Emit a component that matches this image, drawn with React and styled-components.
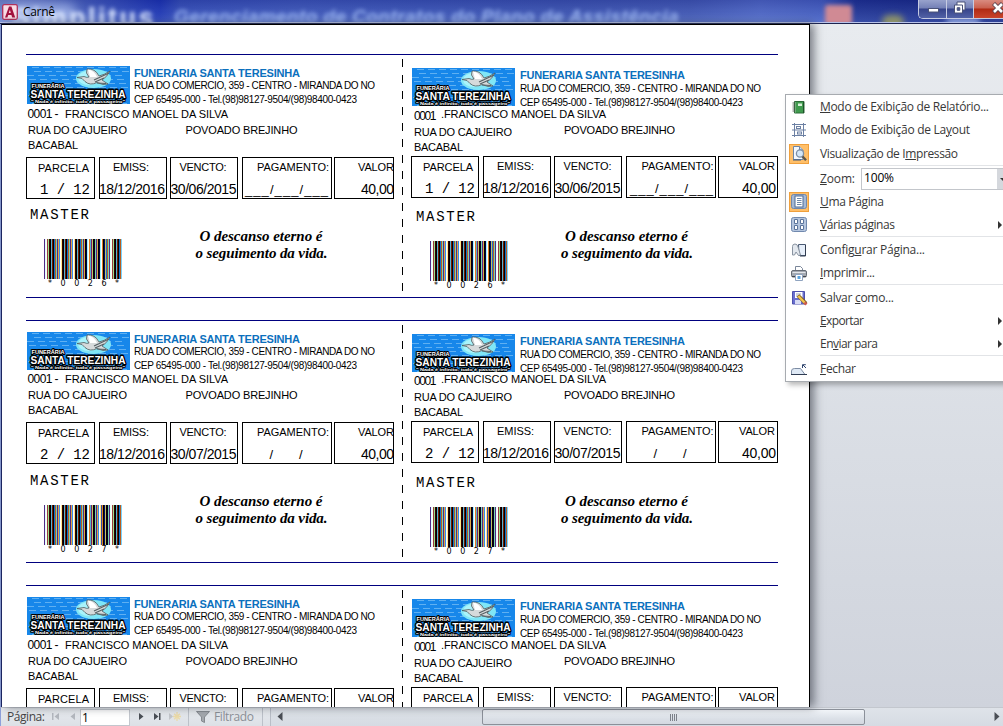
import React, { useLayoutEffect, useRef } from "react";
import styled, { createGlobalStyle, css } from "styled-components";

const Global = createGlobalStyle`
  body { margin: 0; overflow: hidden; background: #d3d7df; }
  * { box-sizing: border-box; }
`;

const SANS = '"Liberation Sans", Arial, sans-serif';
const MONO = '"Liberation Mono", "Courier New", monospace';
const SERIF = '"Liberation Serif", "Times New Roman", serif';
const UI = '"Open Sans", "Noto Sans", sans-serif';

/* ---------- text that is tracked to fill a given width ---------- */

const Run = styled.span`
  display: inline-block;
  flex: none;
  white-space: pre;
  font-family: ${(p) => p.$font || SANS};
  font-size: ${(p) => p.$size || 12}px;
  font-weight: ${(p) => (p.$bold ? 700 : 400)};
  font-style: ${(p) => (p.$italic ? "italic" : "normal")};
  color: ${(p) => p.$color || "#000"};
  line-height: ${(p) => p.$line || 12}px;
  margin-left: ${(p) => p.$x || 0}px;
  margin-top: ${(p) => p.$y || 0}px;
`;

function Fit({ w, children, ...rest }) {
  const ref = useRef(null);
  useLayoutEffect(() => {
    const el = ref.current;
    el.style.width = "auto";
    el.style.letterSpacing = "0px";
    const natural = el.getBoundingClientRect().width;
    const n = el.textContent.length;
    el.style.letterSpacing = (w - natural) / Math.max(1, n - 1) + "px";
    el.style.width = w + "px";
  }, [w, children]);
  return (
    <Run ref={ref} {...rest}>
      {children}
    </Run>
  );
}

/* ---------- window frame ---------- */

const Window = styled.div`
  position: relative;
  display: flex;
  flex-direction: column;
  width: 1003px;
  height: 726px;
  overflow: hidden;
  background: #d3d7df;
`;

const TitleBar = styled.header`
  position: relative;
  display: flex;
  flex: none;
  height: 24px;
  overflow: hidden;
  border-bottom: 1px solid #1c2350;
  background: linear-gradient(90deg, #8b9fdc 0, #5f79ca 60px, #1f39bc 160px, #3c57c0 180px, #4661c2 300px, #435ebe 420px, #445db8 560px, #4a62bb 690px, #5a74d0 760px, #4f6acb 822px, #223694 856px, #182980 1003px);
`;

const GlassShade = styled.div`
  position: absolute;
  inset: 0 0 1px 0;
  background: linear-gradient(180deg, rgba(8, 16, 110, 0.3), rgba(110, 135, 215, 0.28));
`;

const GlassEdge = styled.div`
  position: absolute;
  inset: auto 0 0 0;
  height: 1px;
  background: #b9c3ea;
`;

const Behind = styled.span`
  position: absolute;
  left: ${(p) => p.$left}px;
  top: ${(p) => p.$top}px;
  font: ${(p) => p.$font};
  letter-spacing: ${(p) => p.$track || 0}px;
  color: ${(p) => p.$color};
  filter: blur(${(p) => p.$blur}px);
  white-space: pre;
`;

const Glow = styled.span`
  position: absolute;
  left: ${(p) => p.$left}px;
  top: ${(p) => p.$top}px;
  width: ${(p) => p.$w}px;
  height: ${(p) => p.$h}px;
  border-radius: ${(p) => p.$r || 3}px;
  background: ${(p) => p.$fill};
  filter: blur(${(p) => p.$blur || 2}px);
`;

const Caption = styled.div`
  position: relative;
  display: flex;
  padding-left: 2px;
  svg { margin-top: 4px; }
`;

const Buttons = styled.div`
  position: relative;
  display: flex;
  margin-left: auto;
  width: 85px;
  height: 19px;
  border: solid #c6cbe2;
  border-width: 0 0 1px 1px;
  border-radius: 0 0 0 5px;
  overflow: hidden;
`;

const WinButton = styled.div`
  display: flex;
  align-items: flex-start;
  flex: none;
  width: ${(p) => p.$w}px;
  height: 18px;
  padding: ${(p) => p.$pad};
  border-right: 1px solid #c6cbe2;
  background: ${(p) =>
    p.$close
      ? "linear-gradient(180deg,#d98b80 0,#c9604f 8px,#b02a14 9px,#c8442c 18px)"
      : "linear-gradient(180deg,#98a2cc 0,#7480b6 8px,#36438a 9px,#5262a6 18px)"};
`;

const Body = styled.main`
  position: relative;
  flex: none;
  display: flex;
  height: 683px;
  border-left: 1px solid #8ea0da;
  background: linear-gradient(180deg, #e8ebef 0, #dde1e7 330px, #cfd3dc 683px);
`;

const Sheet = styled.section`
  flex: none;
  width: 809px;
  height: 683px;
  overflow: hidden;
  padding: 29px 0 0 24px;
  background: #fff;
  border: solid #000;
  border-width: 1px 1px 0 1px;
  border-left-color: #1b2560;
  box-shadow: 4px 0 9px rgba(60, 65, 75, 0.65);
`;

/* ---------- receipts ---------- */

const Receipt = styled.article`
  display: flex;
  width: 752px;
  height: ${(p) => p.$h}px;
  margin-bottom: 22px;
  border: solid #00007f;
  border-width: 1px 0;
`;

const Tear = styled.div`
  flex: none;
  width: 1px;
  height: 232px;
  margin-top: 4px;
  background: repeating-linear-gradient(180deg, #000 0 8px, transparent 8px 16px);
`;

const Slip = styled.div`
  flex: none;
  width: ${(p) => p.$w}px;
  height: 241px;
`;

const Head = styled.div`
  display: flex;
  height: 50px;
  padding-left: ${(p) => p.$pad}px;
  svg { flex: none; margin-top: ${(p) => p.$logo}px; }
`;

const HeadText = styled.div`
  display: flex;
  flex-direction: column;
  align-items: flex-start;
`;

const Line = styled.div`
  display: flex;
  align-items: flex-start;
  height: 12px;
  margin-top: ${(p) => p.$mt || 0}px;
`;

const Fields = styled.div`
  display: flex;
  margin-top: ${(p) => p.$mt}px;
  padding-left: ${(p) => p.$pad}px;
`;

const Box = styled.div`
  flex: none;
  display: flex;
  flex-direction: column;
  align-items: flex-start;
  width: ${(p) => p.$w}px;
  height: 42px;
  margin-left: ${(p) => p.$ml || 0}px;
  border: 1px solid #000;
`;

const Foot = styled.div`
  display: flex;
`;

const FootLeft = styled.div`
  flex: none;
  display: flex;
  flex-direction: column;
  align-items: flex-start;
  width: 150px;
  svg { display: block; margin-left: ${(p) => p.$bar}px; margin-top: ${(p) => p.$gap}px; }
`;

const Motto = styled.div`
  display: flex;
  flex-direction: column;
  align-items: flex-start;
`;

function Logo() {
  const dashes = [];
  for (let y = 1; y < 38; y += 4) {
    for (let x = (y * 5) % 9; x < 96; x += 11) {
      dashes.push(<rect key={x + "-" + y} x={x} y={y} width="7" height="1" fill="#5fb0f2" />);
    }
  }
  const word = { fontFamily: SANS, fontWeight: 700, paintOrder: "stroke", stroke: "#000", strokeLinejoin: "round", fill: "#fff" };
  return (
    <svg width="103" height="38" viewBox="0 0 103 38">
      <rect width="103" height="38" fill="#1787ea" />
      {dashes}
      <ellipse cx="66.500" cy="12.500" rx="17.500" ry="9.500" fill="#7fe6f7" />
      <ellipse cx="62" cy="12" rx="11" ry="7" fill="#a9f3fb" />
      <path d="M50 11.500 L57 10.500 Q60 12 62 11 Q58 7 60 3 Q68 2 72 10 Q77 9 83 5 Q80 11 75 14 L81 18 L76 18.500 L70 16.500 Q63 20 58 15.500 L55 12.500Z" fill="#d6dadb" stroke="#4c5c60" strokeWidth=".8" />
      <path d="M61 3.500 Q67 4 70 11 L63 11Z" fill="#fff" />
      <path d="M67 14 L82 7 M68 16 L77 12 M70 17 L79 17.500" stroke="#566165" strokeWidth="1.200" fill="none" />
      <text {...word} x="4.500" y="22" fontSize="5.500" strokeWidth="2" textLength="33" lengthAdjust="spacingAndGlyphs">FUNERÁRIA</text>
      <text {...word} x="3.500" y="32" fontSize="10.800" strokeWidth="2.800" textLength="95" lengthAdjust="spacingAndGlyphs">SANTA TEREZINHA</text>
      <text {...word} x="4" y="36.600" fontSize="4.400" strokeWidth="1.800" textLength="94" lengthAdjust="spacingAndGlyphs">" Nada é infinito, tudo é passageiro"</text>
    </svg>
  );
}

/* Code 39 element widths, bar and space alternating */
const CODE39 = {
  "*": "nwnnwnwnn",
  0: "nnnwwnwnn",
  2: "nnwwnnnnw",
  6: "nnwwwnnnn",
  7: "nnnwnnwnw",
  8: "wnnwnnwnn",
};

function Barcode({ code }) {
  const unit = 0.8125;
  const bars = [];
  let x = 0;
  for (const ch of code) {
    [...CODE39[ch]].forEach((e, i) => {
      const w = (e === "w" ? 3 : 1) * unit;
      if (i % 2 === 0) bars.push([x, x + w]);
      x += w;
    });
    x += unit;
  }
  const ink = (a, b) =>
    bars.reduce((s, [p, q]) => s + Math.max(0, Math.min(b, q) - Math.max(a, p)), 0) / (b - a);
  const level = (a) => Math.round(255 * (1 - Math.min(1, ink(a - 0.3, a + 0.63))));
  const cols = [];
  for (let i = 0; i < 78; i++) {
    cols.push(
      <rect key={i} x={i} width="1" height="40" fill={`rgb(${level(i)},${level(i + 0.333)},${level(i + 0.667)})`} />
    );
  }
  return (
    <svg width="78" height="40" shapeRendering="crispEdges">
      {cols}
    </svg>
  );
}

const LEFT = {
  width: 376, pad: 1, logo: 11, textX: 4, title: 12, line1: 1, line2: 2, titleW: 166, line1W: 241, line2W: 223,
  codeX: 1.5, codeW: 31, code: "0001 -", codeY: 0, nameX: 6.5, name: "FRANCISCO MANOEL DA SILVA", nameW: 163, nameMt: 3,
  streetX: 2, streetW: 99, streetY: 0, areaX: 58.5, areaW: 112, streetMt: 4, cityMt: 3, cityW: 50,
  boxPad: 0, boxMt: 6,
  boxes: [
    { w: 69, ml: 0, lx: 11, lw: 51, ly: 4, vx: 13, vw: 50 },
    { w: 68, ml: 4, lx: 13, lw: 36, ly: 3, vx: -1, vw: 66 },
    { w: 68, ml: 3, lx: 8.5, lw: 47, ly: 3, vx: -0.5, vw: 66 },
    { w: 90, ml: 4, lx: 14, lw: 72, ly: 3, vx: 2, vw: 83, sx: 26.5 },
    { w: 60, ml: 2, lx: 23, lw: 36, ly: 3, vx: 26, vw: 33 },
  ],
  planX: 4, planW: 59, planMt: 10, bar: 18, barGap: 18, digitX: 22, mottoX: 23.5, mottoMt: 31,
};

const RIGHT = {
  width: 375, pad: 9, logo: 13, textX: 5, title: 14, line1: 2, line2: 2, titleW: 165, line1W: 241, line2W: 223,
  codeX: 11, codeW: 22.5, code: "0001", codeY: 2, nameX: 4.5, name: ".FRANCISCO MANOEL DA SILVA", nameW: 165, nameMt: 3,
  streetX: 11, streetW: 98, streetY: 2, areaX: 52, areaW: 111, streetMt: 4, cityMt: 5, cityW: 49,
  boxPad: 8, boxMt: 3,
  boxes: [
    { w: 68, ml: 0, lx: 11, lw: 50, ly: 4, vx: 13, vw: 50 },
    { w: 68, ml: 4, lx: 13, lw: 37, ly: 3, vx: -1, vw: 66 },
    { w: 68, ml: 3, lx: 8.5, lw: 48, ly: 3, vx: -0.5, vw: 66 },
    { w: 90, ml: 4, lx: 14.5, lw: 72, ly: 3, vx: 3, vw: 83, sx: 26.5 },
    { w: 60, ml: 2, lx: 20, lw: 36, ly: 3, vx: 23, vw: 34 },
  ],
  planX: 13, planW: 59, planMt: 13, bar: 27, barGap: 18, digitX: 31, mottoX: 12, mottoMt: 32,
};

function SlipView({ side, data }) {
  const s = side;
  const labels = ["PARCELA", "EMISS:", "VENCTO:", "PAGAMENTO:", "VALOR"];
  const values = [data.part, "18/12/2016", data.due, null, "40,00"];
  return (
    <Slip $w={s.width}>
      <Head $pad={s.pad} $logo={s.logo}>
        <Logo />
        <HeadText>
          <Fit w={s.titleW} $size={11} $bold $color="#0b70bd" $x={s.textX} $y={s.title}>FUNERARIA SANTA TERESINHA</Fit>
          <Fit w={s.line1W} $size={10} $x={s.textX} $y={s.line1}>RUA DO COMERCIO, 359 - CENTRO - MIRANDA DO NO</Fit>
          <Fit w={s.line2W} $size={10} $x={s.textX} $y={s.line2}>CEP 65495-000 - Tel.(98)98127-9504/(98)98400-0423</Fit>
        </HeadText>
      </Head>
      <Line $mt={s.nameMt + data.up}>
        <Fit w={s.codeW} $size={12} $x={s.codeX} $y={s.codeY}>{s.code}</Fit>
        <Fit w={s.nameW} $size={11} $x={s.nameX}>{s.name}</Fit>
      </Line>
      <Line $mt={s.streetMt}>
        <Fit w={s.streetW} $size={11} $x={s.streetX} $y={s.streetY}>RUA DO CAJUEIRO</Fit>
        <Fit w={s.areaW} $size={11} $x={s.areaX}>POVOADO BREJINHO</Fit>
      </Line>
      <Line $mt={s.cityMt}>
        <Fit w={s.cityW} $size={11} $x={s.streetX}>BACABAL</Fit>
      </Line>
      <Fields $mt={s.boxMt} $pad={s.boxPad}>
        {s.boxes.map((b, i) => (
          <Box key={i} $w={b.w} $ml={b.ml}>
            <Fit w={b.lw} $size={11} $x={b.lx} $y={b.ly}>{labels[i]}</Fit>
            {i === 3 ? (
              data.blank ? (
                <Fit w={b.vw} $size={13} $x={b.vx} $y={11}>___/___/___</Fit>
              ) : (
                <Fit w={33} $size={13} $x={b.sx} $y={11}>{"/      /"}</Fit>
              )
            ) : (
              <Fit w={b.vw} $font={i === 0 ? MONO : SANS} $size={14} $x={b.vx} $y={i === 0 ? 10 : 10}>{values[i]}</Fit>
            )}
          </Box>
        ))}
      </Fields>
      <Foot>
        <FootLeft $bar={s.bar} $gap={s.barGap}>
          <Fit w={s.planW} $font={MONO} $size={14} $x={s.planX} $y={s.planMt - data.up}>MASTER</Fit>
          <Barcode code={data.code} />
          <Fit w={71} $font={'"DejaVu Sans", sans-serif'} $size={8} $x={s.digitX} $y={-1}>{data.code}</Fit>
        </FootLeft>
        <Motto>
          <Fit w={123} $font={SERIF} $size={15} $bold $italic $x={s.mottoX} $y={s.mottoMt}>O descanso eterno é</Fit>
          <Fit w={132} $font={SERIF} $size={15} $bold $italic $x={s.mottoX - 4} $y={5}>o seguimento da vida.</Fit>
        </Motto>
      </Foot>
    </Slip>
  );
}

const RECEIPTS = [
  { h: 244, part: "1 / 12", due: "30/06/2015", code: "*0026*", blank: true, up: 0 },
  { h: 243, part: "2 / 12", due: "30/07/2015", code: "*0027*", up: -1 },
  { h: 244, part: "3 / 12", due: "30/08/2015", code: "*0028*", up: 0 },
];

/* ---------- context menu ---------- */

const Menu = styled.nav`
  position: absolute;
  left: 785px;
  top: 94px;
  width: 230px;
  height: 288px;
  border: 1px solid #a7abb0;
  background: #fff;
  box-shadow: 3px 3px 5px rgba(0, 0, 0, 0.28);
`;

const Item = styled.div`
  display: flex;
  align-items: flex-start;
  height: 23px;
  margin-top: ${(p) => p.$mt || 0}px;
`;

const IconCell = styled.span`
  flex: none;
  display: flex;
  align-items: center;
  justify-content: center;
  width: 20px;
  height: 20px;
  margin: 2px 11px 0 3px;
  ${(p) =>
    p.$on &&
    css`
      background: #ffbf69;
      border: 1px solid #f0a03c;
    `}
`;

const Rule = styled.div`
  height: 1px;
  margin: 0 0 1px 34px;
  background: #e2e4e7;
`;

const Submenu = styled.span`
  margin-left: auto;
  margin-right: 12px;
  margin-top: 8px;
  border: 4px solid transparent;
  border-left: 4px solid #333;
  border-right: 0;
`;

const ZoomBox = styled.span`
  flex: none;
  display: flex;
  width: 160px;
  height: 22px;
  margin: 1px 0 0 6px;
  border: 1px solid #c3c6cb;
`;

const ZoomArrow = styled.span`
  margin-left: auto;
  width: 23px;
  background: #d5d8dd;
  &::after {
    content: "";
    display: block;
    margin: 9px 0 0 3px;
    width: 0;
    border: 3px solid transparent;
    border-top-color: #333;
  }
`;

const IcReport = () => (
  <svg width="16" height="16" viewBox="0 0 16 16">
    <path d="M3.500 2.500h9.500v11.500h-9.500z" fill="#3f9b4e" stroke="#2c6a38" />
    <path d="M12.500 3v11" stroke="#1e5229" />
    <path d="M4.500 3v10.500" stroke="#7cc486" />
    <rect x="7" y="4.500" width="4" height="2.500" fill="#d8f0d8" />
    <path d="M1.500 4h3M1.500 6h3M1.500 8h3M1.500 10h3M1.500 12h3" stroke="#505a52" strokeWidth=".9" />
  </svg>
);
const IcLayout = () => (
  <svg width="16" height="16" viewBox="0 0 16 16" fill="none" stroke="#6c80a3">
    <path d="M3.500 1v14M12.500 1v14M1 2.500h14M1 8h14M1 13.500h14" />
    <rect x="5.500" y="4.500" width="4" height="2" fill="#fff" />
    <rect x="6.500" y="10" width="4" height="2" fill="#fff" />
  </svg>
);
const IcPreview = () => (
  <svg width="18" height="18" viewBox="0 0 18 18">
    <path d="M3.500 1.500h6l3.500 3.500v9.500h-9.500z" fill="#f4f8fd" stroke="#6e86a6" />
    <path d="M9.500 1.500v3.500h3.500" fill="#cfdcec" stroke="#6e86a6" />
    <circle cx="10" cy="8.500" r="3.600" fill="#d5e7f7" stroke="#7d8fa6" strokeWidth="1.300" />
    <path d="M12.500 11.500l3.500 3.800" stroke="#5d564a" strokeWidth="2.400" />
    <path d="M3 15h8" stroke="#3f5878" />
  </svg>
);
const IcOne = () => (
  <svg width="18" height="18" viewBox="0 0 18 18">
    <rect x="1.500" y="1.500" width="15" height="14" rx="2" fill="#a5b8d4" stroke="#6f87ad" />
    <rect x="5" y="3" width="8" height="11" fill="#fff" stroke="#4f6a94" />
    <path d="M7 5.500h4.500M7 7.500h4.500M7 9.500h4.500M7 11.500h4.500" stroke="#7088aa" />
  </svg>
);
const IcMany = () => (
  <svg width="18" height="18" viewBox="0 0 18 18">
    <rect x="1.500" y="1.500" width="15" height="14" rx="2" fill="#b4c5de" stroke="#7189ae" />
    <path d="M4.500 3.500h3v4h-3zM10.500 3.500h3v4h-3zM4.500 9.500h3v4h-3zM10.500 9.500h3v4h-3z" fill="#fff" stroke="#5a749c" />
  </svg>
);
const IcSetup = () => (
  <svg width="16" height="16" viewBox="0 0 16 16">
    <path d="M7.500 2.500h7v11H8z" fill="#e7effa" stroke="#4a5a74" />
    <path d="M14.500 3v11H9" fill="none" stroke="#313c50" />
    <path d="M1.500 13V4.500Q1.500 2 4 2q2.500 0 3 3L9.500 13l-2 .5L5 10l-1.500 3z" fill="#e3e8ee" stroke="#8a94a1" />
  </svg>
);
const IcPrint = () => (
  <svg width="18" height="18" viewBox="0 0 18 18">
    <path d="M5.500 7V2.500h5l2 2V7" fill="#fff" stroke="#7a8699" />
    <rect x="1.500" y="6.500" width="15" height="6.500" rx="1.500" fill="#a4a9b1" stroke="#666c76" />
    <path d="M2.500 8.500h13" stroke="#e2e5ea" />
    <path d="M2 12.500h14" stroke="#44484f" />
    <path d="M5.500 10.500h7v6h-7z" fill="#fff" stroke="#8fa3bf" />
    <rect x="7.500" y="12" width="3" height="3" fill="#5aa2dd" />
  </svg>
);
const IcSave = () => (
  <svg width="18" height="18" viewBox="0 0 18 18">
    <path d="M2.500 2.500h12v12.500h-12z" fill="#6a6fd0" stroke="#4d51ac" />
    <rect x="5" y="3" width="7.500" height="6" fill="#fff" />
    <path d="M6 5h5M6 7h4" stroke="#9aa0c0" />
    <rect x="5" y="11" width="6" height="4" fill="#d8dcf4" />
    <path d="M8 6.500l8 8" stroke="#7a5a1c" strokeWidth="3.800" />
    <path d="M8.300 7l6.700 7" stroke="#f3c44e" strokeWidth="2.400" />
    <path d="M14.500 13.500l2 2" stroke="#d05a50" strokeWidth="2.600" />
  </svg>
);
const IcClose = () => (
  <svg width="18" height="18" viewBox="0 0 18 18">
    <path d="M1.500 14.500V11q0-2.500 3-2.500h6l4.500 6z" fill="#dfe9f5" stroke="#7d8ca3" />
    <path d="M1 14.500h16" stroke="#2f3b52" />
    <path d="M16 8l-3-3M12.500 8V4.700h3.300" stroke="#2f456e" fill="none" />
  </svg>
);

function MenuItem({ icon, on, w, mt, more, children }) {
  return (
    <Item $mt={mt}>
      <IconCell $on={on}>{icon}</IconCell>
      <Fit w={w} $font={UI} $line={23} $color="#383838">{children}</Fit>
      {more && <Submenu />}
    </Item>
  );
}

/* ---------- status bar ---------- */

const Status = styled.footer`
  flex: none;
  display: flex;
  align-items: stretch;
  height: 19px;
  border-top: 1px solid #c3c7ce;
  border-left: 1px solid #8ea0da;
  background: linear-gradient(180deg, #dfe3e9, #d6dbe3);
`;

const Nav = styled.div`
  flex: none;
  display: flex;
  width: 270px;
  padding-left: 6px;
  background: linear-gradient(180deg, #e9ecf0, #dce0e6);
  border-right: 1px solid #b9bec7;
`;

const PageInput = styled.div`
  flex: none;
  display: flex;
  align-items: flex-start;
  width: 50px;
  height: 17px;
  margin: 1px 0 0 4px;
  border: 1px solid #c3c7ce;
  background: #fff;
`;

const Split = styled.span`
  flex: none;
  width: 1px;
  margin-left: ${(p) => p.$ml}px;
  background: #bcc1c9;
`;

const NavIcon = styled.svg`
  flex: none;
  margin-left: ${(p) => p.$ml}px;
`;

const Scroll = styled.div`
  flex: 1;
  display: flex;
  height: 18px;
  padding: 1px 0 0 6px;
`;

const Thumb = styled.div`
  flex: none;
  display: flex;
  justify-content: center;
  gap: 1px;
  width: 383px;
  height: 16px;
  margin-left: 199px;
  padding-top: 4px;
  border: 1px solid #8b9099;
  border-radius: 2px;
  background: linear-gradient(180deg, #f1f4f8, #dce1e8 60%, #d3d8e0);
  i { width: 1px; height: 7px; background: #7d828b; }
`;

export default function App() {
  return (
    <Window>
      <Global />
      <TitleBar>
        <GlassShade />
        <Glow $left={10} $top={4} $w={66} $h={20} $fill="rgba(200,216,255,.6)" $r={8} $blur={6} />
        <Behind $left={12} $top={2} $font={`700 27px/32px ${SANS}`} $track={2.5} $color="#dde8ff" $blur={2}>Simplitus</Behind>
        <Behind $left={174} $top={5} $font={`italic 700 19px/24px ${SANS}`} $track={0.42} $color="rgba(170,196,252,.85)" $blur={2}>Gerenciamento de Contratos do Plano de Assistência</Behind>
        <Glow $left={825} $top={5} $w={27} $h={20} $fill="#d08a94" />
        <Glow $left={882} $top={15} $w={22} $h={14} $fill="#8d9268" $r={10} $blur={3} />
        <Glow $left={946} $top={18} $w={34} $h={8} $fill="#8fa5df" $r={4} $blur={3} />
        <GlassEdge />
        <Caption>
          <svg width="16" height="16" viewBox="0 0 16 16">
            <rect x=".7" y=".7" width="14.600" height="14.600" rx="1.500" fill="#f8dbe4" stroke="#b0315c" strokeWidth="1.300" />
            <path d="M3 13.500L7 2.500h2.400l3.800 11h-3l-.8-2.500H6.200l-.8 2.500zM6.800 9h2L7.900 5.800z" fill="#a4123f" fillRule="evenodd" />
          </svg>
          <Fit w={32} $font={UI} $x={5} $line={23}>Carnê</Fit>
        </Caption>
        <Buttons>
          <WinButton $w={28} $pad="8px 0 0 9px">
            <svg width="11" height="5"><rect x=".5" y=".5" width="10" height="3.500" fill="#fff" stroke="#4b5378" /></svg>
          </WinButton>
          <WinButton $w={27} $pad="1px 0 0 6px">
            <svg width="13" height="13" viewBox="0 0 13 13">
              <path d="M4 1h8v8h-8z" fill="#fff" stroke="#4b5378" />
              <path d="M1.500 4h8v8h-8z" fill="#fff" stroke="#4b5378" />
              <path d="M4.200 6.700h2.600v2.600H4.200z" fill="#4a5898" stroke="#4b5378" />
            </svg>
          </WinButton>
          <WinButton $w={45} $close $pad="2px 0 0 18px">
            <svg width="12" height="12" viewBox="0 0 12 12">
              <path d="M1.500 1.500l9 9M10.500 1.500l-9 9" stroke="#5a4350" strokeWidth="4.400" />
              <path d="M2 2l8 8M10 2l-8 8" stroke="#fff" strokeWidth="2.600" />
            </svg>
          </WinButton>
        </Buttons>
      </TitleBar>

      <Body>
        <Sheet>
          {RECEIPTS.map((r) => (
            <Receipt key={r.code} $h={r.h}>
              <SlipView side={LEFT} data={r} />
              <Tear />
              <SlipView side={RIGHT} data={r} />
            </Receipt>
          ))}
        </Sheet>
      </Body>

      <Status>
        <Nav>
          <Fit w={38} $font={UI} $line={18} $color="#444">Página:</Fit>
          <NavIcon $ml={7} width="24" height="18" viewBox="0 0 24 18" fill="#b4b8bf">
            <path d="M0 5h1.500v7H0zM7 5v7L2.500 8.500zM23 5v7l-4.500-3.500z" />
          </NavIcon>
          <PageInput><Fit w={7} $font={UI} $x={1} $line={15}>1</Fit></PageInput>
          <NavIcon $ml={8} width="44" height="18" viewBox="0 0 44 18" fill="#4a4e55">
            <path d="M1 5v7l4.500-3.500zM16 5v7l4.500-3.500zM21 5h1.500v7H21z" />
            <path d="M31 5v7l4-3.500z" fill="#c3c6cb" />
            <path d="M39 4v9M35 8.500h8M36.200 5.700l5.600 5.600M41.800 5.700l-5.600 5.600" stroke="#ecdba8" strokeWidth="1.300" />
          </NavIcon>
          <Split $ml={6} />
          <NavIcon $ml={7} width="14" height="18" viewBox="0 0 14 18">
            <path d="M.5 3.500h13L8.500 9v5.500L5.500 13V9z" fill="#a4a8ae" stroke="#85898f" />
          </NavIcon>
          <Fit w={40} $font={UI} $line={18} $x={4} $color="#8c9097">Filtrado</Fit>
          <Split $ml={8} />
        </Nav>
        <Scroll>
          <svg width="6" height="16" viewBox="0 0 6 16"><path d="M5.500 3v9L.5 7.500z" fill="#4a4e55" /></svg>
          <Thumb><i /><i /><i /><i /></Thumb>
          <NavIcon $ml={129} width="6" height="16" viewBox="0 0 6 16"><path d="M.5 3v9l5-4.500z" fill="#4a4e55" /></NavIcon>
        </Scroll>
      </Status>

      <Menu>
        <MenuItem icon={<IcReport />} w={169}><u>M</u>odo de Exibição de Relatório...</MenuItem>
        <MenuItem icon={<IcLayout />} w={150}>Modo de Exibição de La<u>y</u>out</MenuItem>
        <MenuItem icon={<IcPreview />} on mt={1} w={138}>Visualização de I<u>m</u>pressão</MenuItem>
        <Rule />
        <Item>
          <IconCell />
          <Fit w={35} $font={UI} $line={23} $color="#383838"><u>Z</u>oom:</Fit>
          <ZoomBox>
            <Fit w={30} $font={UI} $line={18} $x={2}>100%</Fit>
            <ZoomArrow />
          </ZoomBox>
        </Item>
        <MenuItem icon={<IcOne />} on w={64}><u>U</u>ma Página</MenuItem>
        <MenuItem icon={<IcMany />} w={75} more><u>V</u>árias páginas</MenuItem>
        <Rule />
        <MenuItem icon={<IcSetup />} w={105}>Config<u>u</u>rar Página...</MenuItem>
        <MenuItem icon={<IcPrint />} w={55}><u>I</u>mprimir...</MenuItem>
        <Rule />
        <MenuItem icon={<IcSave />} w={74}>Salvar <u>c</u>omo...</MenuItem>
        <MenuItem w={44} more><u>E</u>xportar</MenuItem>
        <MenuItem w={58} more>En<u>v</u>iar para</MenuItem>
        <Rule />
        <MenuItem icon={<IcClose />} w={36}><u>F</u>echar</MenuItem>
      </Menu>
    </Window>
  );
}
